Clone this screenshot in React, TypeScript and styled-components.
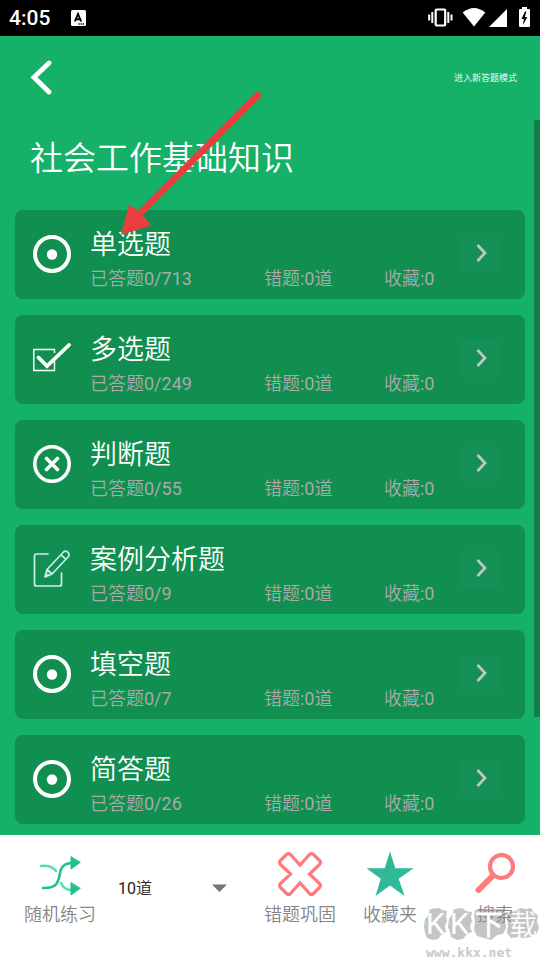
import React from "react";
import styled, { createGlobalStyle } from "styled-components";

const GlobalStyle = createGlobalStyle`
  * { box-sizing: border-box; }
  body { margin: 0; font-family: Roboto, "Noto Sans CJK SC DemiLight", "Noto Sans CJK SC", sans-serif; }
  button, select { font: inherit; color: inherit; background: none; border: 0; margin: 0; padding: 0; cursor: pointer; }
  svg { display: block; flex: none; }
`;

const Screen = styled.div`
  position: relative;
  display: flex;
  flex-direction: column;
  min-height: 100vh;
  background: #15b168;
  color: #fff;
  overflow: hidden;
`;

const StatusBar = styled.header`
  display: flex;
  align-items: center;
  gap: 20px;
  height: 36px;
  padding: 0 9px;
  background: #000;
`;

const Clock = styled.time`
  font-size: 21px;
  line-height: 36px;
  font-weight: 500;
`;

const StatusIcons = styled.div`
  display: flex;
  align-items: center;
  margin-left: auto;
`;

const Toolbar = styled.nav`
  display: flex;
  align-items: center;
  justify-content: space-between;
  height: 84px;
  padding: 0 23px 0 30px;
`;

const BackButton = styled.button`
  width: 24px;
  height: 36px;
`;

const ModeButton = styled.button`
  font-size: 9px;
  line-height: 16px;
`;

const Content = styled.main`
  position: relative;
  flex: 1;
  padding: 0 15px 11px;
`;

const PageTitle = styled.h1`
  margin: 0 15px;
  padding: 14px 0 26px;
  font-size: 33px;
  line-height: 50px;
  font-weight: 350;
`;

const CardList = styled.div`
  display: grid;
  gap: 16px;
`;

const Card = styled.button`
  display: flex;
  align-items: center;
  width: 100%;
  height: 89px;
  padding: 0 26px 1px 18px;
  border-radius: 8px;
  background: #118f50;
  text-align: left;
`;

const CardBody = styled.span`
  flex: 1;
  margin-left: 19px;
  padding-top: 10px;
`;

const CardTitle = styled.span`
  display: block;
  font-size: 27px;
  line-height: 40px;
  font-weight: 350;
`;

const CardStats = styled.span`
  display: grid;
  grid-template-columns: 174fr 120fr 77fr;
  font-size: 18px;
  line-height: 28px;
  font-weight: 350;
  color: #aaa;
`;

const Figure = styled.span`
  font-weight: 400;
`;

const ChevronTile = styled.span`
  display: grid;
  place-items: center;
  width: 38px;
  height: 38px;
  background: #148f55;
`;

const ScrollThumb = styled.div`
  position: absolute;
  top: 0;
  right: 0;
  width: 6px;
  height: 597px;
  background: #107f4a;
`;

const BottomBar = styled.footer`
  display: grid;
  grid-template-columns: 118fr 137fr 90fr 90fr 105fr;
  align-items: start;
  height: 125px;
  padding-top: 15px;
  background: #fff;
  color: #858585;
`;

const Action = styled.button<{ $inset?: number }>`
  display: flex;
  flex-direction: column;
  align-items: center;
  padding-left: ${(p) => p.$inset ?? 0}px;
  font-size: 18px;
  line-height: 26px;
  font-weight: 350;
  white-space: nowrap;
`;

const ActionIcon = styled.span`
  display: grid;
  place-items: center;
  height: 48px;
  margin-bottom: 4px;
`;

const CountPicker = styled.div`
  display: grid;
  align-items: center;
  margin: 23px 27px 0 0;
  color: #222;
  & > * { grid-area: 1 / 1; }
  & > svg { justify-self: end; pointer-events: none; }
`;

const CountSelect = styled.select`
  appearance: none;
  width: 100%;
  height: 30px;
  font-size: 16px;
`;

const Pointer = styled.svg`
  position: absolute;
  left: 115px;
  top: 85px;
  pointer-events: none;
`;

const Watermark = styled.svg`
  position: absolute;
  right: 0;
  bottom: 0;
  pointer-events: none;
`;

const RadioIcon = () => (
  <svg width="38" height="38" viewBox="0 0 38 38">
    <circle cx="19" cy="19" r="17" fill="none" stroke="#fff" strokeWidth="4" />
    <circle cx="19" cy="19.500" r="5.200" fill="#fff" />
  </svg>
);

const CheckIcon = () => (
  <svg width="38" height="38" viewBox="0 0 38 38" fill="none" stroke="#fff">
    <path d="M21.500 13V9.500H.800v21h20.700V21" strokeWidth="1.400" />
    <path d="M5.500 17.500 14 26 36 5" strokeWidth="3.800" strokeLinecap="round" />
  </svg>
);

const CrossIcon = () => (
  <svg width="38" height="38" viewBox="0 0 38 38" fill="none" stroke="#fff">
    <circle cx="19" cy="19" r="17.200" strokeWidth="3.600" />
    <path d="m13.500 13.500 11 11m0-11-11 11" strokeWidth="3.600" strokeLinecap="round" />
  </svg>
);

const EditIcon = () => (
  <svg width="38" height="38" viewBox="0 0 38 38" fill="none" stroke="#c9efea" strokeWidth="1.700" strokeLinecap="round" strokeLinejoin="round">
    <path d="M15 4H3.500Q1.500 4 1.500 6v28q0 2 2 2h23q2 0 2-2V23" />
    <path d="m12 27 2-7.500L30.500 2q2-1.800 4.200.2t.8 4.300L19 24zM14 19.500l5 4.500M28 4.800l5 4.500M12 27l3-2.500" />
  </svg>
);

const Chevron = () => (
  <svg width="14" height="20" viewBox="0 0 14 20">
    <path d="m4.500 1 7.500 8-7.500 8" fill="none" stroke="#bcc8c2" strokeWidth="2.800" />
  </svg>
);

type Kind = "radio" | "check" | "cross" | "edit";

const icons: Record<Kind, React.FC> = { radio: RadioIcon, check: CheckIcon, cross: CrossIcon, edit: EditIcon };

const sections: { title: string; total: number; kind: Kind }[] = [
  { title: "单选题", total: 713, kind: "radio" },
  { title: "多选题", total: 249, kind: "check" },
  { title: "判断题", total: 55, kind: "cross" },
  { title: "案例分析题", total: 9, kind: "edit" },
  { title: "填空题", total: 7, kind: "radio" },
  { title: "简答题", total: 26, kind: "radio" },
];

const SectionCard = ({ title, total, kind }: { title: string; total: number; kind: Kind }) => {
  const Icon = icons[kind];
  return (
    <Card type="button">
      <Icon />
      <CardBody>
        <CardTitle>{title}</CardTitle>
        <CardStats>
          <span>已答题<Figure>0/{total}</Figure></span>
          <span>错题<Figure>:0</Figure>道</span>
          <span>收藏<Figure>:0</Figure></span>
        </CardStats>
      </CardBody>
      <ChevronTile><Chevron /></ChevronTile>
    </Card>
  );
};

export default function App() {
  return (
    <>
      <GlobalStyle />
      <Screen>
        <StatusBar>
          <Clock>4:05</Clock>
          <svg width="16" height="16" viewBox="0 0 16 16">
            <rect x="1" width="15" height="16" rx="1.500" fill="#fff" />
            <path d="M4.800 11.500 8 4l3.200 7.500M5.800 9.300h4.400" fill="none" stroke="#000" strokeWidth="1.900" />
            <path d="M8.500 14h1.300m.8 0h1.300m.8 0H14" stroke="#000" strokeWidth="1.300" />
          </svg>
          <StatusIcons>
            <svg width="103" height="22" viewBox="428 7 103 22" fill="#fff">
              <rect x="435.700" y="9.500" width="9.500" height="16" rx="1" fill="none" stroke="#fff" strokeWidth="2.200" />
              <path d="M431.300 12h2v11h-2zM428.200 14.500h2v6h-2zM447.300 12h2v11h-2zM450.500 14.500h2v6h-2z" />
              <path d="M462.700 12.500q11.300-9 22.600 0L474 26.500z" />
              <path d="M489 27 507 9v18z" />
              <path d="M522 7h5v2h2q1 0 1 1v16q0 1-1 1h-9q-1 0-1-1V10q0-1 1-1h2z" />
              <path d="M525 11.500 521.500 19h2.300l-.8 6 4.300-8h-2.500l1.600-5.500z" fill="#000" />
            </svg>
          </StatusIcons>
        </StatusBar>

        <Toolbar>
          <BackButton type="button" aria-label="返回">
            <svg width="24" height="36" viewBox="0 0 24 36">
              <path d="M19 3 4 17.200 19 32" fill="none" stroke="#fff" strokeWidth="4.800" strokeLinecap="round" />
            </svg>
          </BackButton>
          <ModeButton type="button">进入新答题模式</ModeButton>
        </Toolbar>

        <Content>
          <PageTitle>社会工作基础知识</PageTitle>
          <CardList>
            {sections.map((s) => <SectionCard key={s.title} {...s} />)}
          </CardList>
          <ScrollThumb />
        </Content>

        <BottomBar>
          <Action type="button" $inset={2}>
            <ActionIcon>
              <svg width="42" height="44" viewBox="0 -4 42 44" fill="none" strokeWidth="2.600" strokeLinecap="round">
                <path d="M2 10c8-1 12 1 15 5M22 27q3 7 10 7" stroke="#58dfb4" />
                <path d="M4 32c26 1 8-23 28-25" stroke="#1fc18e" />
                <path d="M32 1v12l9-6.500zM32 27v12l9-6.500z" fill="#1fc18e" stroke="#1fc18e" strokeWidth="1" strokeLinejoin="round" />
              </svg>
            </ActionIcon>
            随机练习
          </Action>
          <CountPicker>
            <CountSelect aria-label="题目数量" defaultValue="10">
              <option value="10">10道</option>
              <option value="20">20道</option>
              <option value="50">50道</option>
            </CountSelect>
            <svg width="16" height="8" viewBox="0 0 16 8"><path d="M0 .500h15L7.500 8z" fill="#757575" /></svg>
          </CountPicker>
          <Action type="button">
            <ActionIcon>
              <svg width="46" height="46" viewBox="0 0 46 46">
                <path d="M13.500 3.500 23 14l9.500-10.500q2-2 4 0l6 6q2 2 0 4L32.500 23l10 9.500q2 2 0 4l-6 6q-2 2-4 0L23 32l-9.500 10.500q-2 2-4 0l-6-6q-2-2 0-4l10-9.500-10-9.500q-2-2 0-4l6-6q2-2 4 0z" fill="none" stroke="#ff7a7c" strokeWidth="3.200" />
              </svg>
            </ActionIcon>
            错题巩固
          </Action>
          <Action type="button">
            <ActionIcon>
              <svg width="48" height="46" viewBox="0 0 48 46">
                <path d="m24 .500 5.300 16.700H47.500L32.700 27.800 38.500 45 24 34.500 9.500 45l5.300-17.200L.500 17.200h18.200z" fill="#30b998" />
              </svg>
            </ActionIcon>
            收藏夹
          </Action>
          <Action type="button" $inset={15}>
            <ActionIcon>
              <svg width="42" height="42" viewBox="0 0 42 42" fill="none" stroke="#ff7a7c">
                <circle cx="27.500" cy="13.500" r="11.500" strokeWidth="4.200" />
                <path d="M18.500 23 4.500 37" strokeWidth="6" strokeLinecap="round" />
              </svg>
            </ActionIcon>
            搜索
          </Action>
        </BottomBar>

        <Pointer width="150" height="155" viewBox="115 85 150 155" fill="#e53f3f" aria-hidden="true">
          <path d="m257.500 90.500 5 5L143 215l8 10.500L121 235l8-30.500 9.500 6z" />
        </Pointer>

        <Watermark width="120" height="56" viewBox="420 904 120 56">
          <g fill="#8c8c8c" fillOpacity="0.500">
            <path d="m430 909 9-1 3 2 5 1-1 5 1 5-2 5 1 6-5 3-3 4-6 1-5-2-2-5-1-6 1-8 3-3z" />
            <path d="m454 909 8-1 4 3 6 1-1 5 1 4-2 5 2 6-6 3-3 4-6 1-6-3-1-5-2-5 1-8 3-4z" />
            <path d="m475 910 6-1 22 0 3 4-1 7 1 8-3 6-6 1-6 5-7-2-7-2-3-6 1-8-1-7z" />
            <path d="m509 912 7-1 4-3 6 1 5-1 3 5 4 2-1 6 2 7-3 7-6 2-5 1-7-1-7 1-4-5 1-8-1-7z" />
          </g>
          <g fill="#fff" fontWeight="400">
            <text x="426" y="934" fontSize="30">K</text>
            <text x="450" y="934" fontSize="30">K</text>
            <text x="475" y="935" fontSize="28" fontWeight="700">下</text>
            <text x="509" y="935" fontSize="28" fontWeight="500">载</text>
          </g>
          <text x="426" y="957" fill="#cacaca" fontSize="13" fontWeight="700" fontFamily="DejaVu Sans Mono, monospace">www.kkx.net</text>
        </Watermark>
      </Screen>
    </>
  );
}
